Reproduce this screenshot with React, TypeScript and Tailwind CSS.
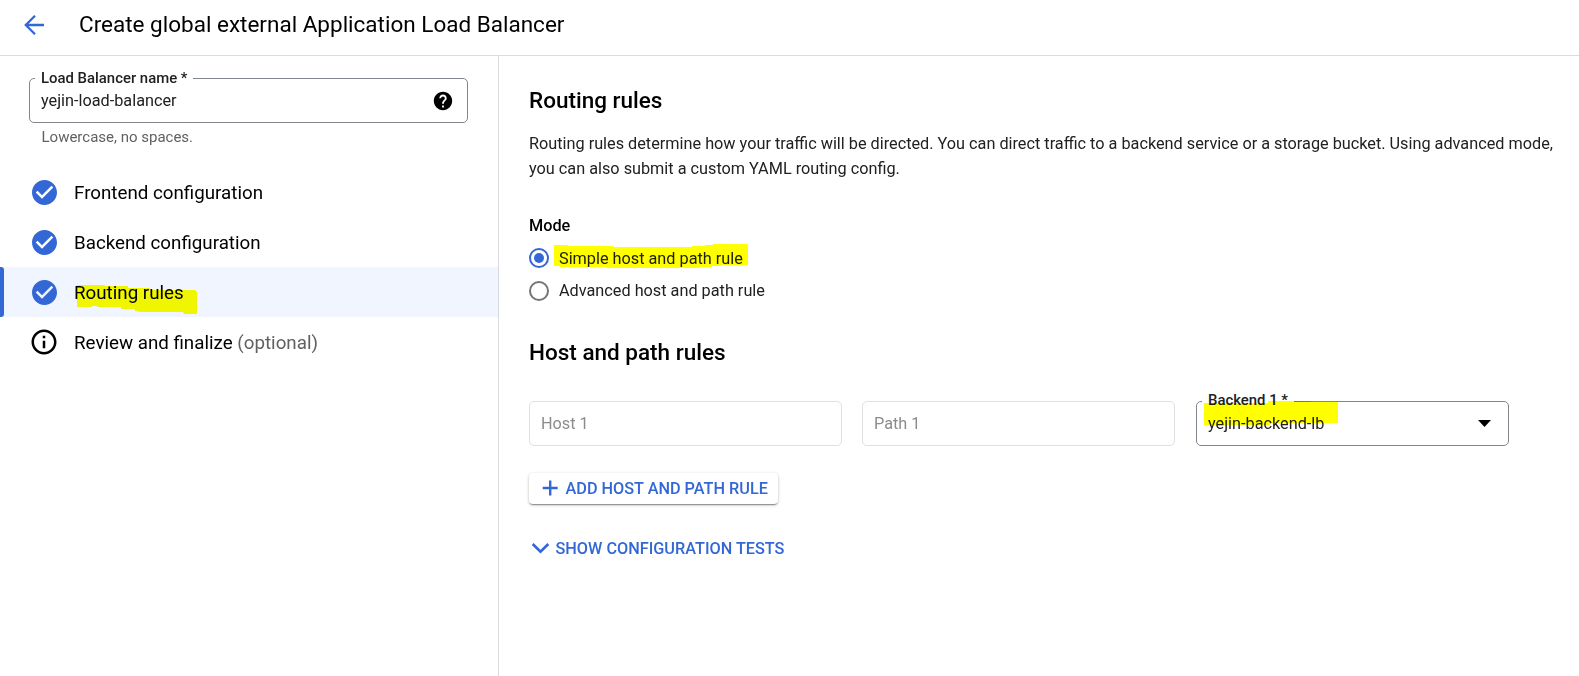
import type { ReactNode } from "react";

const CHECK_CIRCLE =
  "M12 2C6.48 2 2 6.48 2 12s4.48 10 10 10 10-4.48 10-10S17.52 2 12 2zm-2 15l-5-5 1.41-1.41L10 14.17l7.59-7.59L19 8l-9 9z";
const INFO_OUTLINE =
  "M11 17h2v-6h-2v6zm1-15C6.48 2 2 6.48 2 12s4.48 10 10 10 10-4.48 10-10S17.52 2 12 2zm0 18c-4.41 0-8-3.59-8-8s3.59-8 8-8 8 3.59 8 8-3.59 8-8 8zM11 9h2V7h-2v2z";
const HELP =
  "M12 2C6.48 2 2 6.48 2 12s4.48 10 10 10 10-4.48 10-10S17.52 2 12 2zm1 17h-2v-2h2v2zm2.07-7.75l-.9.92C13.45 12.9 13 13.5 13 15h-2v-.5c0-1.1.45-2.1 1.17-2.83l1.24-1.26c.37-.36.59-.86.59-1.41 0-1.1-.9-2-2-2s-2 .9-2 2H8c0-2.21 1.79-4 4-4s4 1.79 4 4c0 .88-.36 1.68-.93 2.25z";

function Icon({ d, className, viewBox = "0 0 24 24" }: { d: string; className: string; viewBox?: string }) {
  return (
    <svg viewBox={viewBox} fill="currentColor" className={"shrink-0 " + className}>
      <path d={d} />
    </svg>
  );
}

function Marker({ points, className }: { points: string; className: string }) {
  return (
    <svg className={"pointer-events-none absolute overflow-visible mix-blend-multiply " + className}>
      <polygon points={points} fill="#ffff00" />
    </svg>
  );
}

function Step({ label, note, done, active, children }: {
  label: string;
  note?: string;
  done?: boolean;
  active?: boolean;
  children?: ReactNode;
}) {
  return (
    <li className={"relative flex h-[50px] items-center pl-[29px] " + (active ? "bg-[#f0f5ff]" : "")}>
      {active && <span className="absolute inset-y-0 left-0 w-1 rounded-r-[3px] bg-[#3367d6]" />}
      <span className="flex w-[45px]">
        <Icon
          d={done ? CHECK_CIRCLE : INFO_OUTLINE}
          viewBox={done ? "-0.4 -0.4 24 24" : "0 0 24 24"}
          className={done ? "size-[30px] text-[#3367d6]" : "size-[30px] text-black"}
        />
      </span>
      <span className="pt-[2px] text-[18.75px] leading-[25px] text-black">
        {label}
        {note && <span className="text-[#616161]"> {note}</span>}
      </span>
      {children}
    </li>
  );
}

function FieldLabel({ children, className }: { children: ReactNode; className: string }) {
  return (
    <span
      className={
        "absolute left-[5px] bg-white px-[6px] text-[14.9px] leading-5 font-medium whitespace-nowrap text-[#212121] " +
        className
      }
    >
      {children}
    </span>
  );
}

function Radio({ checked }: { checked?: boolean }) {
  return (
    <span
      className={
        "flex size-5 shrink-0 items-center justify-center rounded-full border-2 " +
        (checked ? "border-[#3367d6]" : "border-[#757575]")
      }
    >
      {checked && <span className="size-[10px] rounded-full bg-[#3367d6]" />}
    </span>
  );
}

export default function App() {
  return (
    <div className="flex h-[676px] w-[1579px] flex-col overflow-hidden bg-white font-['Roboto',sans-serif] text-[16.25px] text-[#212121]">
      <header className="flex h-14 shrink-0 items-center border-b border-[#dadce0] pb-[6px]">
        <svg viewBox="0 0 20 22" className="ml-6 h-[22px] w-5 text-[#3367d6]" fill="none" stroke="currentColor" strokeWidth="2.3">
          <path d="M20 11H1.8M11 1.8L1.8 11l9.2 9.2" />
        </svg>
        <h1 className="ml-[35px] pb-[2px] text-[22.5px] leading-[30px] text-black">
          Create global external Application Load Balancer
        </h1>
      </header>
      <div className="flex flex-1">
        <aside className="w-[499px] shrink-0 border-r border-[#dadce0] pt-[22px]">
          <div className="relative ml-[29px] flex h-[45px] w-[439px] items-center justify-between rounded-[5px] border border-[#80868b] pr-[13px] pl-[11px]">
            <FieldLabel className="-top-[11px]">Load Balancer name *</FieldLabel>
            <span className="leading-[25px]">yejin-load-balancer</span>
            <Icon d={HELP} className="size-[22px] text-black" />
          </div>
          <p className="mt-[4px] ml-[41.5px] text-[15px] leading-5 text-[#616161]">Lowercase, no spaces.</p>
          <ul className="mt-5">
            <Step label="Frontend configuration" done />
            <Step label="Backend configuration" done />
            <Step label="Routing rules" done active>
              <Marker
                className="top-[18px] left-[77px] h-[30px] w-[120px]"
                points="0,0 28,0 28,1 51,1 51,3 73,3 73,5 118,5 120,7 120,29 107,29 106,27 64,27 58,26 58,24 44,24 44,22 20,22 20,21 15,21 15,22 0,22"
              />
            </Step>
            <Step label="Review and finalize" note="(optional)" />
          </ul>
        </aside>
        <main className="flex-1 pt-[29px] pl-[30px]">
          <h2 className="text-[22.5px] leading-[30px] font-medium text-black">Routing rules</h2>
          <p className="mt-[16px] w-[1040px] leading-[25px]">
            Routing rules determine how your traffic will be directed. You can direct traffic to a backend service or a
            storage bucket. Using advanced mode,
            <br />
            you can also submit a custom YAML routing config.
          </p>
          <h3 className="mt-[32px] leading-[25px] font-medium text-black">Mode</h3>
          <div className="mt-[7px] flex flex-col gap-[8px] leading-[25px]">
            <label className="relative flex h-[25px] items-center gap-[10px]">
              <Radio checked />
              <span className="pt-[2px]">Simple host and path rule</span>
              <Marker
                className="-top-px left-[25px] h-6 w-[194px]"
                points="0,1 14,1 14,2 59,2 59,3 138,3 138,2 151,2 151,1 159,1 159,0 194,0 194,21 167,21 167,22 158,22 158,23 146,23 146,24 52,24 52,23 6,23 6,22 0,22"
              />
            </label>
            <label className="flex h-[25px] items-center gap-[10px]">
              <Radio />
              Advanced host and path rule
            </label>
          </div>
          <h2 className="mt-[34px] text-[22.5px] leading-[30px] font-medium text-black">Host and path rules</h2>
          <div className="mt-[34px] flex h-[45px] leading-[25px]">
            <div className="mr-5 flex w-[313px] items-center rounded-[5px] border border-[#e0e0e0] pl-[11px] text-[#8c8c8c]">Host 1</div>
            <div className="mr-[21px] flex w-[313px] items-center rounded-[5px] border border-[#e0e0e0] pl-[11px] text-[#8c8c8c]">Path 1</div>
            <div className="relative flex w-[313px] items-center justify-between rounded-[5px] border border-[#80868b] pr-[17px] pl-[11px]">
              <FieldLabel className="-top-3">Backend 1 *</FieldLabel>
              <span>yejin-backend-lb</span>
              <svg viewBox="0 0 13 7" className="h-[7px] w-[13px]">
                <path d="M0 0h13L6.5 7z" />
              </svg>
              <Marker
                className="-top-px left-[7px] h-6 w-[134px]"
                points="0,2 64,2 64,0 107,0 107,1 134,1 134,22 66,22 66,24 0,24"
              />
            </div>
          </div>
          <button className="mt-[27px] flex h-[31px] w-[249px] items-center rounded-[4px] pl-[13px] font-medium text-[#3367d6] shadow-[0_1px_3px_rgba(0,0,0,0.3),0_2px_1px_-1px_rgba(0,0,0,0.3)]">
            <svg viewBox="0 0 16 16" className="mb-px size-4 shrink-0" fill="none" stroke="currentColor" strokeWidth="2.4">
              <path d="M8.2 .5v15M.7 8h15" />
            </svg>
            <span className="ml-[7.5px] leading-[25px] whitespace-nowrap">ADD HOST AND PATH RULE</span>
          </button>
          <button className="mt-[31px] flex h-[27px] items-center pl-[3px] font-medium text-[#3367d6]">
            <svg viewBox="0 0 17 11" className="h-[11px] w-[17px]" fill="none" stroke="currentColor" strokeWidth="2.6">
              <path d="M.7 1l7.8 7.6L16.3 1" />
            </svg>
            <span className="ml-[6.5px] leading-[25px]">SHOW CONFIGURATION TESTS</span>
          </button>
        </main>
      </div>
    </div>
  );
}
